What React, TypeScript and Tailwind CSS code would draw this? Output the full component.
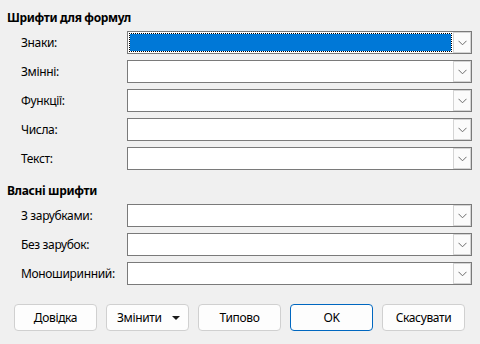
import React from "react";

const Chevron = () => (
  <svg width="9" height="6" viewBox="0 0 9 6" className="block">
    <path d="M0.5 0.8 L4.5 4.8 L8.5 0.8" fill="none" stroke="#6b6b6b" strokeWidth="1" />
  </svg>
);

function Combo({ focused }: { focused?: boolean }) {
  return (
    <div className="w-[345px] h-[23px] shrink-0 border border-[#7a7a7a] bg-white flex">
      <div className="flex-1 p-px">
        {focused ? (
          <div className="w-full h-full bg-[#0078d7] border border-dotted border-black bg-clip-padding" />
        ) : null}
      </div>
      <div className="w-[18px] h-full border border-[#d4d4d4] bg-[#fbfbfb] flex items-center justify-center">
        <Chevron />
      </div>
    </div>
  );
}

function Row({ label, focused }: { label: string; focused?: boolean }) {
  return (
    <div className="flex items-center h-[23px]">
      <div className="w-[127px] pl-[21px] shrink-0 whitespace-nowrap">{label}</div>
      <Combo focused={focused} />
    </div>
  );
}

function Btn({ children, primary }: { children: React.ReactNode; primary?: boolean }) {
  return (
    <div
      className={
        "w-[83px] h-[27px] shrink-0 rounded-[4px] bg-[#fdfdfd] flex items-center justify-center border " +
        (primary ? "border-[#0067c0]" : "border-[#d0d0d0]")
      }
    >
      {children}
    </div>
  );
}

export default function App() {
  return (
    <div
      className="w-[480px] h-[344px] bg-[#f0f0f0] text-[12px] leading-[16px] tracking-[-0.35px] text-black overflow-hidden"
      style={{ fontFamily: '"Noto Sans", "Segoe UI", sans-serif' }}
    >
      <div className="pt-[10px] pl-[7px] font-bold h-[26px]">Шрифти для формул</div>
      <div className="mt-[5px] flex flex-col gap-[6px]">
        <Row label="Знаки:" focused />
        <Row label="Змінні:" />
        <Row label="Функції:" />
        <Row label="Числа:" />
        <Row label="Текст:" />
      </div>
      <div className="mt-[13px] pl-[7px] font-bold h-[16px]">Власні шрифти</div>
      <div className="mt-[5px] flex flex-col gap-[6px]">
        <Row label="З зарубками:" />
        <Row label="Без зарубок:" />
        <Row label="Моноширинний:" />
      </div>
      <div className="mt-[19px] pl-[14px] flex gap-[9px]">
        <Btn>Довідка</Btn>
        <div className="w-[83px] h-[27px] shrink-0 rounded-[4px] bg-[#fdfdfd] border border-[#d0d0d0] flex items-center pl-[10px] relative">
          <span>Змінити</span>
          <svg width="8" height="4" viewBox="0 0 8 4" className="absolute right-[8px] top-[11px]">
            <path d="M0 0 H8 L4 4 Z" fill="#1a1a1a" />
          </svg>
        </div>
        <Btn>Типово</Btn>
        <Btn primary>OK</Btn>
        <Btn>Скасувати</Btn>
      </div>
    </div>
  );
}
